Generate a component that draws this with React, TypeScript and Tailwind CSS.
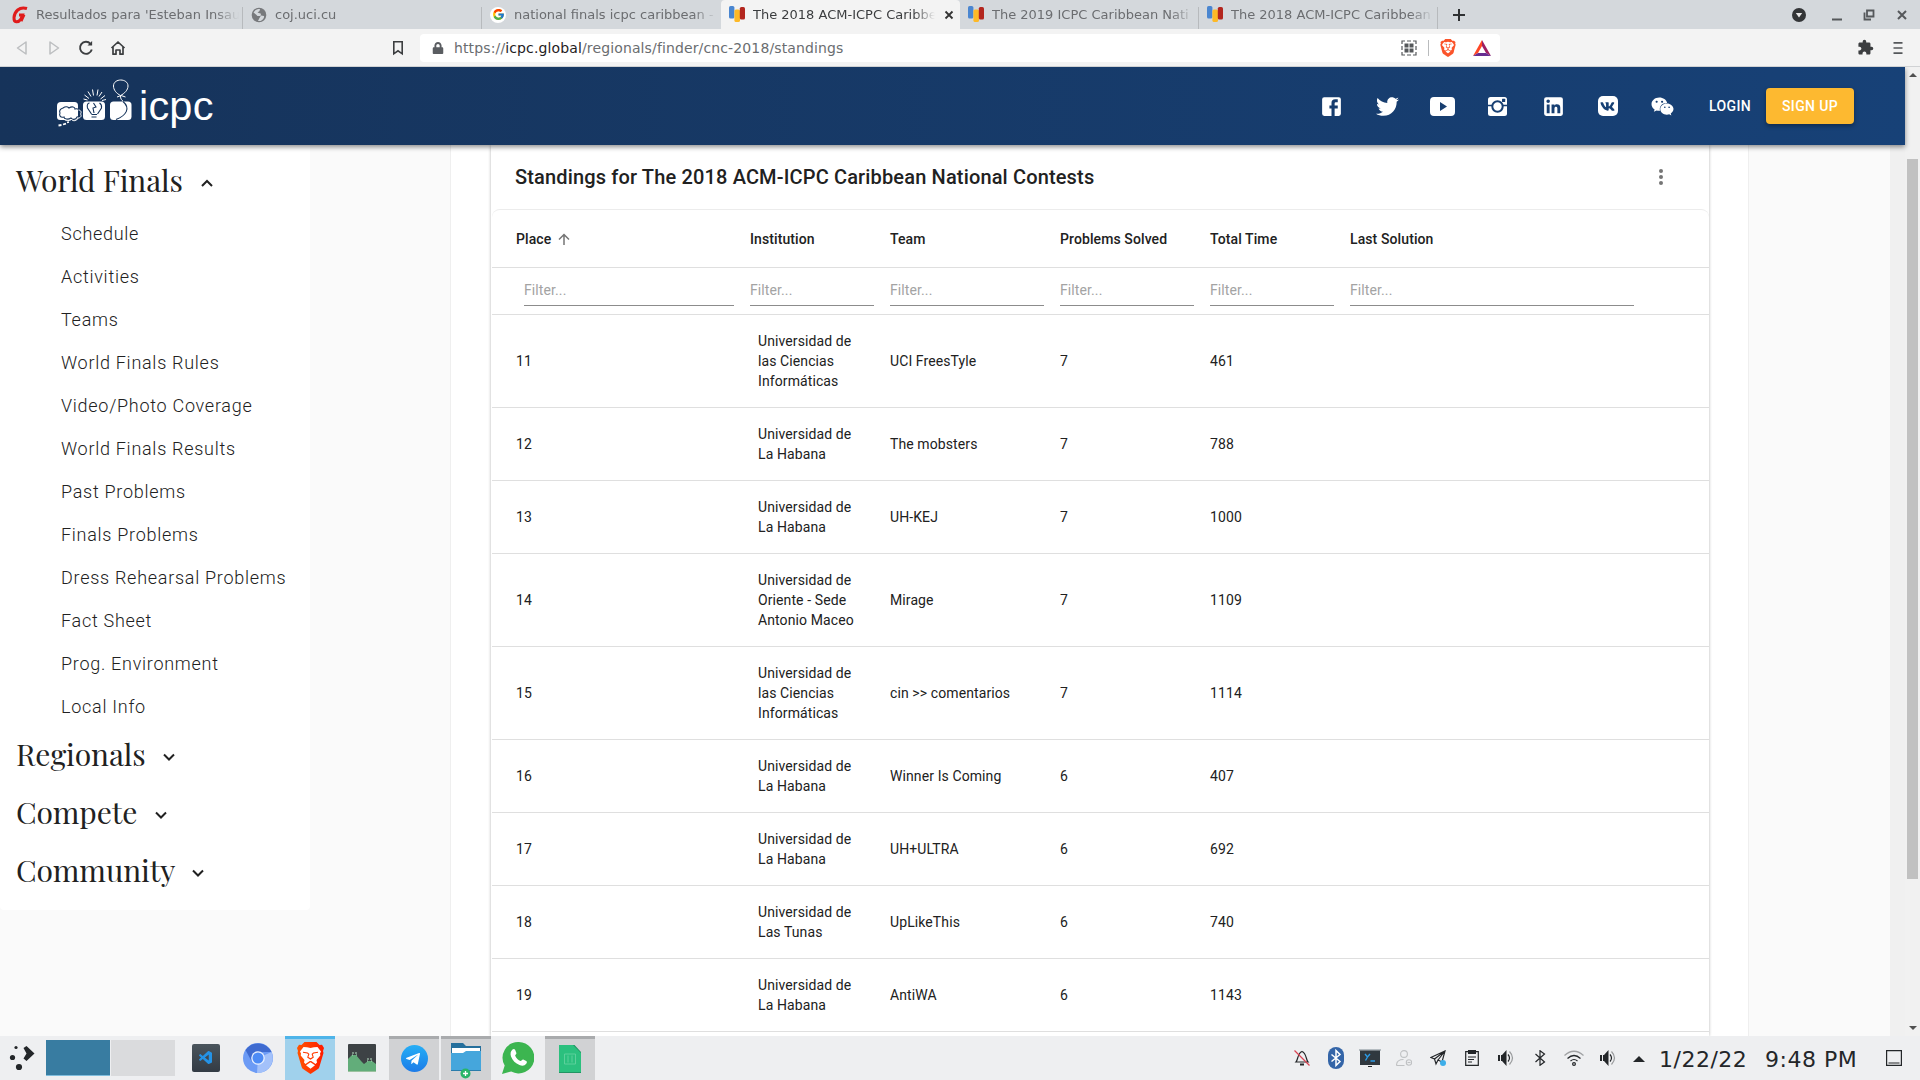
import React from "react";
import { FaTwitter, FaVk, FaWeixin, FaTelegramPlane, FaLock } from "react-icons/fa";
import { FaBrave } from "react-icons/fa6";
import { FcGoogle } from "react-icons/fc";
import { MdExtension } from "react-icons/md";
import { VscVscode } from "react-icons/vsc";

type TabInfo = { title: string; icon: React.ReactNode; active?: boolean };

const IcpcFavicon = () => (
  <svg className="h-5 w-4" viewBox="0 0 16 20">
    <rect x="0" y="1" width="5.4" height="12.5" rx="1.6" fill="#4a86d0" />
    <rect x="5.4" y="4.5" width="5.6" height="12.5" rx="1.6" fill="#fdb927" />
    <rect x="10.8" y="2" width="5.2" height="12.5" rx="1.6" fill="#b3261e" />
  </svg>
);

const GIcon = () => (
  <svg className="h-5 w-4" viewBox="0 0 16 20" fill="none" stroke="#e01b1b" strokeWidth="3">
    <path d="M15 3.5C7 1 2.500 7 2 12.500c-.3 5.500 4 5.500 7 1.500l1.500-4H7M12 9.500l-3 6.500" />
  </svg>
);

const GlobeIcon = () => (
  <svg className="h-4 w-4" viewBox="0 0 16 16">
    <circle cx="8" cy="8" r="7.300" fill="#77797c" />
    <path d="M2.500 5.500c2-3 4-3.500 6.500-3.500l-.5 2-2 1.500 3.500 1.200-.5 2.300h-3L5 7.500zM10 8.500l3 .5c.5 2-1.500 4-3.500 5H7l1.200-2.500z" fill="#d4d8dc" />
  </svg>
);

const tabs: TabInfo[] = [
  { title: "Resultados para 'Esteban Insau", icon: <GIcon /> },
  { title: "coj.uci.cu", icon: <GlobeIcon /> },
  {
    title: "national finals icpc caribbean -",
    icon: (
      <span className="flex h-4 w-4 items-center justify-center rounded-full bg-white">
        <FcGoogle size={13} />
      </span>
    ),
  },
  { title: "The 2018 ACM-ICPC Caribbe", icon: <IcpcFavicon />, active: true },
  { title: "The 2019 ICPC Caribbean Nati", icon: <IcpcFavicon /> },
  { title: "The 2018 ACM-ICPC Caribbean", icon: <IcpcFavicon /> },
];

function TabBar() {
  return (
    <div className="flex h-[29px] shrink-0 bg-[#d4d8dc] pl-[4px] font-['DejaVu_Sans',sans-serif] text-[13px] text-[#6b6d70]">
      {tabs.map((t, i) => (
        <div
          key={i}
          className={
            t.active
              ? "flex w-[239px] shrink-0 items-center rounded-t-[4px] bg-[#f3f3f3] pr-[6px] pl-2 text-[#3b3d3f]"
              : "relative flex w-[239px] shrink-0 items-center pr-[4px] pl-2"
          }
        >
          <span className="flex w-4 shrink-0 items-center justify-center">{t.icon}</span>
          <span className="mt-px ml-[8px] min-w-0 flex-1 overflow-hidden [mask-image:linear-gradient(to_right,black_88%,transparent)] whitespace-nowrap">
            {t.title}
          </span>
          {t.active && (
            <svg className="ml-[9px] h-[10px] w-[10px] shrink-0" viewBox="0 0 10 10" stroke="#333" strokeWidth="1.8">
              <path d="M1.500 1.500l7 7M8.500 1.500l-7 7" />
            </svg>
          )}
          {!t.active && i !== 2 && <span className="absolute right-0 bottom-0 h-[22px] w-px bg-[#b7babd]" />}
        </div>
      ))}
      <div className="flex flex-1 items-center">
        <svg className="ml-[15px] h-3 w-3" viewBox="0 0 12 12" stroke="#2f3133" strokeWidth="2">
          <path d="M6 0v12M0 6h12" />
        </svg>
        <svg className="ml-auto h-4 w-4" viewBox="0 0 16 16">
          <circle cx="8" cy="8" r="7" fill="#333537" />
          <path d="M4.800 6h6.400L8 10.500z" fill="#e8e8e8" />
        </svg>
        <svg className="ml-[24px] h-3 w-3" viewBox="0 0 12 12">
          <path d="M1 9.500h10v2H1z" fill="#55585b" />
        </svg>
        <svg className="ml-[20px] h-3 w-3" viewBox="0 0 12 12" fill="none" stroke="#55585b" strokeWidth="1.800">
          <path d="M4 1.500h6.500v6H4zM1.500 3.500v7H8" />
        </svg>
        <svg className="mr-[13px] ml-[22px] h-[10px] w-[10px]" viewBox="0 0 10 10" stroke="#55585b" strokeWidth="2">
          <path d="M1 1l8 8M9 1l-8 8" />
        </svg>
      </div>
    </div>
  );
}

function Toolbar() {
  return (
    <div className="flex h-[38px] shrink-0 items-center border-b border-[#d0d2d4] bg-[#f3f3f3] pr-[14px]">
      <svg className="ml-[15px] h-4 w-3.5" viewBox="0 0 14 16" fill="none" stroke="#bcbec0" strokeWidth="1.500" strokeLinejoin="round">
        <path d="M11 2v12L2.500 8z" />
      </svg>
      <svg className="ml-[18px] h-4 w-3.5" viewBox="0 0 14 16" fill="none" stroke="#bcbec0" strokeWidth="1.500" strokeLinejoin="round">
        <path d="M3 2v12l8.500-6z" />
      </svg>
      <svg className="ml-[17px] h-4 w-4" viewBox="0 0 16 16" fill="none" stroke="#3c3e40" strokeWidth="1.900">
        <path d="M12.500 3.800A6 6 0 1 0 13.800 9.500" />
        <path d="M9.500 5.600h4.600V1z" fill="#3c3e40" stroke="none" />
      </svg>
      <svg className="ml-[16px] h-4 w-4" viewBox="0 0 16 16" fill="none" stroke="#3c3e40" strokeWidth="1.700" strokeLinejoin="round">
        <path d="M1.500 8L8 2l6.500 6M3 7v7.200h3V10h4v4.200h3V7" />
      </svg>
      <svg className="ml-[264px] h-4 w-4" viewBox="0 0 16 16" fill="none" stroke="#3c3e40" strokeWidth="1.600">
        <path d="M3.800 1.800h8.400v12L8 10.800l-4.200 3z" />
      </svg>
      <div className="ml-[14px] flex h-7 w-[1080px] items-center rounded-[4px] bg-white font-['DejaVu_Sans',sans-serif] text-[14px] tracking-[0.130px] text-[#6a6d70]">
        <FaLock className="ml-[12px] h-3 w-3" color="#5a5d61" />
        <span className="mt-px ml-[10px] flex-1 whitespace-nowrap">
          https://<span className="text-[#1f2123]">icpc.global</span>/regionals/finder/cnc-2018/standings
        </span>
        <svg className="h-4 w-4" viewBox="0 0 16 16" fill="none" stroke="#55585b">
          <path d="M1 4V1h3M6 1h4M12 1h3v3M15 6v4M15 12v3h-3M10 15H6M4 15H1v-3M1 10V6" strokeWidth="1.200" />
          <path d="M3.500 3.500h4v4h-4zM8.500 3.500h4v4h-4zM3.500 8.500h4v4h-4zM8.500 8.500h4v4h-4z" fill="#55585b" stroke="none" />
        </svg>
        <span className="mr-[10px] ml-[11px] h-4 w-px bg-[#b9bbbd]" />
        <FaBrave size={18} color="#fb542b" />
        <svg className="mr-[9px] ml-[16px] h-4 w-[18px]" viewBox="0 0 18 16">
          <path d="M9 0L0 16l5-3 4-7z" fill="#ff4724" />
          <path d="M9 0l9 16-5-3-4-7z" fill="#9e1f63" />
          <path d="M0 16h18l-5-3H5z" fill="#662d91" />
        </svg>
      </div>
      <MdExtension className="ml-auto" size={17} color="#3c3e40" />
      <svg className="ml-[16px] h-4 w-4" viewBox="0 0 16 16" stroke="#55585b" strokeWidth="1.700">
        <path d="M3.500 2.800h9M3.500 8h9M3.500 13.200h9" />
      </svg>
    </div>
  );
}

const LogoMark = () => (
  <svg className="h-[56px] w-[86px]" viewBox="50 76 86 56" fill="none" stroke="white">
    <path d="M61 102h13.500a3.500 3.500 0 0 1 3.500 3.500V117a3 3 0 0 1-3 3H60a3 3 0 0 1-3-3v-11a4 4 0 0 1 4-4z" fill="white" stroke="none" />
    <rect x="83" y="101.500" width="22" height="18.500" rx="3.500" fill="white" stroke="none" />
    <rect x="110" y="101.500" width="21.500" height="18.500" rx="3.500" fill="white" stroke="none" />
    <path d="M63 108c3-2 5-1 6 0 3-2 6-1 6 1 3-1 5 1 4 3 2 2 1 5-2 5-1 3-5 3-6 1-3 2-7 1-7-1-4 1-5-2-4-4-1-2 0-4 3-5z" stroke="#16345b" strokeWidth="1.100" />
    <path d="M78.500 110c2 0 3.500 2 2 4 1.500 2 0 4-2.500 4-1 3-5 3.500-6.500 1.500-3 2-7 1-7.500-.5" strokeWidth="1" />
    <path d="M58.500 125.500l3-.5M63 124.500l3-.8M67 122.500l2-.5" strokeWidth="1.800" />
    <path d="M91.500 114l-4-6c-1-4 1-5 2-5M97.500 114l4-6c.5-3-.5-4-2-5M91.500 114.500h5.500M91.500 117h5M94 113l-1-5 3-1-2.500-4" stroke="#16345b" strokeWidth="1.100" />
    <path d="M83.500 99l4 1M84.500 95l4.500 3.500M88 91.500l3 5M92.500 89.500l1 6M98 89.500l-1 6M102 92l-3 4.500M105 95.500l-4.500 3.500M106 99.500l-4 1" strokeWidth="1" />
    <path d="M120.500 95.500c-4-2-7-5.500-7-9.500 0-8 14.500-8 14.500 0 0 4-3.500 7.500-7.500 9.500zM117 97l4-1.500 4.500 1.500M120.500 96c0 3 1 4 3 5.500" strokeWidth="1" />
    <path d="M123 101.500c8 7 3 14-7 18" stroke="#16345b" strokeWidth="1.100" />
  </svg>
);

const mdi = {
  facebook:
    "M5,3H19A2,2 0 0,1 21,5V19A2,2 0 0,1 19,21H5A2,2 0 0,1 3,19V5A2,2 0 0,1 5,3M18,5H15.5A3.5,3.5 0 0,0 12,8.5V11H10V14H12V21H15V14H18V11H15V9A1,1 0 0,1 16,8H18V5Z",
  linkedin:
    "M19,3A2,2 0 0,1 21,5V19A2,2 0 0,1 19,21H5A2,2 0 0,1 3,19V5A2,2 0 0,1 5,3H19M18.5,18.5V13.2A3.26,3.26 0 0,0 15.24,9.94C14.39,9.94 13.4,10.46 12.92,11.24V10.13H10.13V18.5H12.92V13.57C12.92,12.8 13.54,12.17 14.31,12.17A1.4,1.4 0 0,1 15.71,13.57V18.5H18.5M6.88,8.56A1.68,1.68 0 0,0 8.56,6.88C8.56,5.95 7.81,5.19 6.88,5.19A1.69,1.69 0 0,0 5.19,6.88C5.19,7.81 5.95,8.56 6.88,8.56M8.27,18.5V10.13H5.5V18.5H8.27Z",
};

const Mdi = ({ d }: { d: string }) => (
  <svg className="h-[25px] w-[25px]" viewBox="0 0 24 24" fill="white" fillRule="evenodd">
    <path d={d} />
  </svg>
);

function SiteHeader() {
  return (
    <header className="relative z-10 flex h-[78px] shrink-0 items-center bg-linear-to-r from-[#16335a] to-[#174177] text-white shadow-[0_2px_5px_rgba(0,0,0,0.45)]">
      <div className="mt-[-4px] flex h-[56px] items-start pl-[50px]">
        <LogoMark />
        <span className="mt-[6px] ml-[3px] font-['Liberation_Sans',Arial,sans-serif] text-[41.5px] leading-[48px] tracking-[0.2px]">icpc</span>
      </div>
      <div className="ml-auto flex items-center">
        <div className="grid grid-cols-[56px_55px_55.500px_55px_56px_53px_56px] justify-items-center">
          <Mdi d={mdi.facebook} />
          <FaTwitter size={23} className="self-center" />
          <svg className="h-[25px] w-[25px]" viewBox="0 0 25 25" fill="white" fillRule="evenodd">
            <path d="M4 3h17a4 4 0 0 1 4 4v11a4 4 0 0 1-4 4H4a4 4 0 0 1-4-4V7a4 4 0 0 1 4-4zm6 5v9l7-4.500z" />
          </svg>
          <svg className="h-[25px] w-[25px]" viewBox="0 0 25 25">
            <rect x="3" y="3" width="19" height="19" rx="2.500" fill="white" />
            <g fill="none" stroke="#173f72">
              <path d="M3 11.500h4.500M17.500 11.500H22" strokeWidth="1.400" />
              <circle cx="12.500" cy="12.500" r="5.200" strokeWidth="2" />
            </g>
            <rect x="17" y="4.800" width="3.200" height="3.200" rx="0.500" fill="#173f72" />
          </svg>
          <Mdi d={mdi.linkedin} />
          <span className="flex h-[20px] w-5 items-center justify-center self-center rounded-[5px] bg-white">
            <FaVk size={15} color="#174074" />
          </span>
          <FaWeixin size={23} className="self-center" />
        </div>
        <span className="ml-[19px] w-[57px] font-[Roboto,sans-serif] text-sm font-medium tracking-[0.400px]">LOGIN</span>
        <button className="mr-[51px] h-9 w-[88px] rounded-[4px] bg-[#fdb930] font-[Roboto,sans-serif] text-sm font-medium tracking-[0.350px] whitespace-nowrap shadow-[0_2px_4px_rgba(0,0,0,0.35)]">
          SIGN UP
        </button>
      </div>
    </header>
  );
}

const Chevron = ({ up }: { up?: boolean }) => (
  <svg className="h-3 w-3" viewBox="0 0 12 12" fill="none" stroke="#212121" strokeWidth="2">
    <path d={up ? "M1 9l5-5 5 5" : "M1 3.500l5 5 5-5"} />
  </svg>
);

const links = [
  "Schedule",
  "Activities",
  "Teams",
  "World Finals Rules",
  "Video/Photo Coverage",
  "World Finals Results",
  "Past Problems",
  "Finals Problems",
  "Dress Rehearsal Problems",
  "Fact Sheet",
  "Prog. Environment",
  "Local Info",
];

const Heading = ({ text, width, up }: { text: string; width: string; up?: boolean }) => (
  <div className="flex h-[58px] items-center pl-4 font-['Playfair_Display','Liberation_Serif',serif] text-[30px] tracking-[-0.120px] text-[#212121]">
    <span className={"whitespace-nowrap " + width}>{text}</span>
    <span className="mt-[5px]">
      <Chevron up={up} />
    </span>
  </div>
);

function Sidebar() {
  return (
    <aside className="h-[765px] w-[310px] shrink-0 rounded-b-[4px] bg-white pt-[6px]">
      <Heading text="World Finals" width="w-[185px]" up />
      <ul className="pt-[3px] font-[Roboto,sans-serif] text-[18px] font-light tracking-[0.720px] text-[#212121]">
        {links.map((l) => (
          <li key={l} className="flex h-[43px] items-center pl-[61px] whitespace-nowrap">
            {l}
          </li>
        ))}
      </ul>
      <div className="mt-[-3px]">
        <Heading text="Regionals" width="w-[147px]" />
        <Heading text="Compete" width="w-[139px]" />
        <Heading text="Community" width="w-[176px]" />
      </div>
    </aside>
  );
}

const UCI = ["Universidad de", "las Ciencias", "Informáticas"];
const UH = ["Universidad de", "La Habana"];
const rows: [string, string[], string, string, string][] = [
  ["11", UCI, "UCI FreesTyle", "7", "461"],
  ["12", UH, "The mobsters", "7", "788"],
  ["13", UH, "UH-KEJ", "7", "1000"],
  ["14", ["Universidad de", "Oriente - Sede", "Antonio Maceo"], "Mirage", "7", "1109"],
  ["15", UCI, "cin >> comentarios", "7", "1114"],
  ["16", UH, "Winner Is Coming", "6", "407"],
  ["17", UH, "UH+ULTRA", "6", "692"],
  ["18", ["Universidad de", "Las Tunas"], "UpLikeThis", "6", "740"],
  ["19", UH, "AntiWA", "6", "1143"],
];

const gridCols = "grid grid-cols-[234px_140px_170px_150px_140px_300px] items-center border-b border-[#dfdfdf] pl-6";

function Standings() {
  return (
    <div className="w-[1299px] shrink-0 border-x border-[#efefef] bg-white pl-[40px]">
      <div className="h-full w-[1218px] bg-white font-[Roboto,sans-serif] text-sm leading-5 tracking-[0.1px] text-[#212121] shadow-[0_0_3px_rgba(0,0,0,0.3)]">
        <div className="flex h-[64px] items-center justify-between pr-[46px] pl-6">
          <h2 className="text-[20px] font-medium tracking-[0.15px]">Standings for The 2018 ACM-ICPC Caribbean National Contests</h2>
          <svg className="h-4 w-1" viewBox="0 0 4 16" fill="#757575">
            <circle cx="2" cy="2" r="2" />
            <circle cx="2" cy="8" r="2" />
            <circle cx="2" cy="14" r="2" />
          </svg>
        </div>
        <div className="ml-px rounded-t-[8px] border-t border-[#ececec]">
          <div className={gridCols + " h-[58px] font-medium"}>
            <span className="flex items-center">
              Place
              <svg className="ml-[7px] h-3 w-3" viewBox="0 0 12 12" fill="none" stroke="#757575" strokeWidth="1.500">
                <path d="M6 12V1.500M1 6.500l5-5 5 5" />
              </svg>
            </span>
            <span>Institution</span>
            <span>Team</span>
            <span>Problems Solved</span>
            <span>Total Time</span>
            <span>Last Solution</span>
          </div>
          <div className={gridCols + " h-[47px] pb-px text-[#a3a3a3]"}>
            {["ml-2", "", "", "", "", ""].map((c, i) => (
              <span key={i} className={"mr-4 flex h-[30px] items-center border-b border-[#8c8c8c] " + c}>
                Filter...
              </span>
            ))}
          </div>
          {rows.map(([place, inst, team, solved, time]) => (
            <div key={place} className={gridCols + " py-4"}>
              <span>{place}</span>
              <span className="flex flex-col pl-2 whitespace-nowrap">
                {inst.map((s) => (
                  <span key={s}>{s}</span>
                ))}
              </span>
              <span>{team}</span>
              <span>{solved}</span>
              <span>{time}</span>
              <span />
            </div>
          ))}
        </div>
      </div>
    </div>
  );
}

function Page() {
  return (
    <div className="flex h-[969px] shrink-0 overflow-hidden bg-[#f0f0f0]">
      <div className="flex w-[1905px] shrink-0 flex-col">
        <SiteHeader />
        <div className="flex h-[891px] w-[1890px] bg-[#fafafa]">
          <Sidebar />
          <div className="w-[140px] shrink-0" />
          <Standings />
        </div>
      </div>
      <div className="flex w-[15px] flex-col items-center bg-[#f1f1f1]">
        <svg className="mt-[5px] h-[6px] w-2" viewBox="0 0 8 6" fill="#505050">
          <path d="M4 1l4 4H0z" />
        </svg>
        <div className="mt-[81px] h-[720px] w-[11px] bg-[#c1c1c1]" />
        <svg className="mt-auto mb-[5px] h-[6px] w-2" viewBox="0 0 8 6" fill="#505050">
          <path d="M0 1h8L4 5z" />
        </svg>
      </div>
    </div>
  );
}

const Volume = () => (
  <svg className="h-4 w-4" viewBox="0 0 16 16" fill="none">
    <path d="M0 5h2v6H0zM3 5h1l4.500-5v16L4 11H3z" fill="#232629" />
    <path d="M10 4.500q3 3.500 0 7" stroke="#232629" strokeWidth="1.200" />
    <path d="M11.500 1.500q6 6.500 0 13" stroke="#9a9c9e" strokeWidth="1.200" />
  </svg>
);

const Task = ({ children, state }: { children: React.ReactNode; state?: "active" | "open" }) => (
  <div
    className={
      state === "active"
        ? "flex w-[50px] items-center justify-center border-t-[3px] border-[#4eb4e9] bg-[#a0d1ec] pb-[3px]"
        : state === "open"
          ? "flex w-[50px] items-center justify-center border-t-[3px] border-[#a9abad] bg-[#d1d2d4] pb-[3px]"
          : "flex w-[50px] items-center justify-center"
    }
  >
    {children}
  </div>
);

const BraveLion = () => (
  <svg className="h-8 w-[27px]" viewBox="0 0 27 32">
    <defs>
      <linearGradient id="lion" x1="0" x2="1">
        <stop offset="0" stopColor="#ff5500" />
        <stop offset="1" stopColor="#ff1a00" />
      </linearGradient>
    </defs>
    <path d="M7.500 0h12l3 3 2.500-.3L27 6l-1 3 .5 2-4 13.500c-.5 2-1.500 2.500-3 3.500L13.500 32 7.500 28c-1.500-1-2.500-1.500-3-3.500L.5 11 1 9 0 6l2-3.300 2.500.3z" fill="url(#lion)" />
    <path d="M13.500 6l3.500-.8L20.500 5 24 9.500l-1 2 .3 2-3.800 4.500.5 2.500-1.500 1.500-4.300-3h-1.400l-4.300 3L7 20.500 7.500 18l-3.800-4.500.3-2-1-2L6.500 5l3.500.2z" fill="white" />
    <path d="M6 10.300l4.500.7 1.300 1.200-1 3 2.700 1.800 2.700-1.800-1-3 1.300-1.200 4.500-.7" fill="none" stroke="#ff3a00" strokeWidth="1.100" />
    <path d="M9 23.300l4.500-3 4.500 3-4.500 3.500z" fill="white" />
  </svg>
);

function Taskbar() {
  return (
    <div className="flex h-[44px] shrink-0 bg-[#eeeff1]">
      <svg className="mt-[8px] ml-[9px] h-7 w-[26px]" viewBox="0 0 26 28" fill="#232629">
        <circle cx="7" cy="3.500" r="1.600" />
        <circle cx="3.500" cy="13.500" r="2.600" />
        <circle cx="10" cy="23" r="3.100" />
        <path d="M14.500 4l3-2 8 7.500-8 7.500-3-2.500 3-5z" />
      </svg>
      <div className="mt-[4px] ml-[11px] h-9 w-16 border-b border-[#7fbddd] bg-[#387ca1]" />
      <div className="mt-[4px] ml-px h-9 w-16 bg-[#dadbdd]" />
      <div className="ml-[6px] flex gap-[2px]">
        <Task>
          <span className="flex h-7 w-7 items-center justify-center rounded-[2px] bg-linear-to-b from-[#4a555d] to-[#333b44]">
            <VscVscode size={16} color="#2493e6" />
          </span>
        </Task>
        <Task>
          <svg className="h-[30px] w-[30px]" viewBox="0 0 30 30">
            <circle cx="15" cy="15" r="15" fill="#6c9bf5" />
            <path d="M15 15L28.500 9A15 15 0 0 1 14 30z" fill="#a3c1fa" />
            <path d="M2.500 7A15 15 0 0 1 28.500 9H15L9 19z" fill="#3f6bd0" />
            <circle cx="15" cy="15" r="6.800" fill="#e8f0ff" />
            <circle cx="15" cy="15" r="5.500" fill="#4d8bf5" />
          </svg>
        </Task>
        <Task state="active">
          <BraveLion />
        </Task>
        <Task>
          <svg className="h-7 w-7" viewBox="0 0 28 28">
            <rect width="28" height="28" rx="1" fill="#3d4245" />
            <path d="M0 15l4-4h4l5 6 3 3 4-3h4l4 3v7.500H0z" fill="#62ad7a" />
            <path d="M4 9h2M7 9h2M4 11h1M8 11h1M19 15h2M22 15h2M19 17h1M23 17h1" stroke="#b7e0c4" strokeWidth="1.100" />
            <path d="M0 27h28v1H0z" fill="#9bc29f" />
          </svg>
        </Task>
        <Task state="open">
          <span className="mt-px flex h-[27px] w-[27px] items-center justify-center rounded-full bg-linear-to-b from-[#27aef5] to-[#1d7be8]">
            <FaTelegramPlane size={16} color="#fff" className="mr-[2px]" />
          </span>
        </Task>
        <Task state="open">
          <svg className="mt-[5px] h-[36px] w-[30px]" viewBox="0 0 30 36">
            <path d="M0 0h12l3 3h15v10H0z" fill="#256f9c" />
            <path d="M1 5h28v8H1z" fill="#fff" />
            <path d="M0 10h12l3-2h15v20H0z" fill="#45a6dc" />
            <path d="M0 27h30v1H0z" fill="#2a7cab" />
            <circle cx="14.500" cy="30.500" r="5" fill="#27b568" />
            <path d="M14.500 28v5M12 30.500h5" stroke="#fff" strokeWidth="1.300" />
          </svg>
        </Task>
        <Task>
          <svg className="h-8 w-8" viewBox="0 0 32 32">
            <path d="M16.500 0a15.700 15.700 0 1 1-7.300 29.500L0 32l2.700-8.500A15.700 15.700 0 0 1 16.500 0z" fill="#3cb550" />
            <path d="M10.500 7.500c1-1 2.200-.7 2.700.5l1.200 3c.3.800-1.400 2-1.200 2.700 1 2.500 3 4.300 5.300 5.300.8.200 1.800-1.800 2.700-1.500l3 1.500c1 .6.800 1.500 0 2.800-1.500 2-4 2.300-6.700 1.200-4-1.500-7-4.500-8.500-8.500-.8-2.800-.5-5.200 1.500-7z" fill="#fff" />
          </svg>
        </Task>
        <Task state="open">
          <svg className="mt-px h-7 w-[22px]" viewBox="0 0 22 28">
            <path d="M0 0h15l7 7v21H0z" fill="#2bc07e" />
            <path d="M14 0h8v8z" fill="#1f8f5f" />
            <path d="M15.500 0H22v7z" fill="#d1d2d4" />
            <path d="M5.500 9h11v10h-11zM9 10.500v7M13 10.500v7" fill="none" stroke="#5dd09b" strokeWidth="1" />
            <path d="M0 27h22v1H0z" fill="#219463" />
          </svg>
        </Task>
      </div>
      <div className="ml-auto grid grid-cols-[repeat(10,34px)] place-items-center">
        <svg className="h-4 w-4" viewBox="0 0 16 16" fill="none" stroke="#232629" strokeWidth="1.200">
          <path d="M2 12c2-2 1.500-9 6-10.500 4.500 1.500 4 8.500 6 10.500z" />
          <path d="M6 13.500h4v2H6z" fill="#232629" stroke="none" />
          <path d="M.5 .5l15 15" stroke="#da4453" />
        </svg>
        <svg className="h-[22px] w-4" viewBox="0 0 16 22" fill="none">
          <rect width="16" height="22" rx="8" fill="#3465a8" />
          <path d="M3.500 7.500l8.500 7-4 4v-15l4 4-8.500 7" stroke="#fff" strokeWidth="1.500" />
        </svg>
        <svg className="h-[18px] w-[22px]" viewBox="0 0 22 18">
          <path d="M0 0h22v2H0z" fill="#b5bcc1" />
          <path d="M1 1.500h20V16H1z" fill="#30383f" />
          <path d="M9 17h4v1H9z" fill="#232629" />
          <path d="M6 5l2.500 3L11 5M8.500 8l-2 3.500M11.500 12h4.500" stroke="#2b9be6" strokeWidth="1.400" fill="none" />
        </svg>
        <svg className="h-4 w-4" viewBox="0 0 16 16" fill="none" stroke="#bfc1c3" strokeWidth="1.100">
          <circle cx="8" cy="4" r="3.400" />
          <path d="M.5 15.500c0-4 2.500-6 7-6M.5 15.500h8" />
          <circle cx="13" cy="12.500" r="2.700" />
          <path d="M11.500 12.500h3" />
        </svg>
        <svg className="h-4 w-4" viewBox="0 0 16 16" fill="none" stroke="#232629" strokeWidth="1.200">
          <path d="M.8 7.500L15 1l-3 11-4-2-2 4-1.500-5zM15 1L4.500 9M15 1L8 10" />
          <circle cx="13" cy="13" r="3" fill="#3daee9" stroke="none" />
        </svg>
        <svg className="h-4 w-[14px]" viewBox="0 0 14 16" fill="none" stroke="#232629" strokeWidth="1.200">
          <path d="M.7 1.700h12.600v13.600H.7z" />
          <path d="M3 0h8v4H3z" fill="#232629" stroke="none" />
          <path d="M3 7h8M3 9.500h6M3 12h4" />
        </svg>
        <Volume />
        <svg className="h-4 w-4" viewBox="0 0 16 16" fill="none" stroke="#232629" strokeWidth="1.200">
          <path d="M3.500 4l9 8L8 15.300V.7L12.500 4l-9 8" />
        </svg>
        <svg className="h-4 w-5" viewBox="0 0 20 16" fill="none" stroke="#232629" strokeWidth="1.200">
          <path d="M.5 5.500Q10-3 19.500 5.500" stroke="#a0a2a4" />
          <path d="M3.500 8.500q6.500-6 13 0M6.500 11q3.500-3 7 0" />
          <circle cx="10" cy="14" r="1.400" />
        </svg>
        <Volume />
      </div>
      <svg className="mt-[20px] ml-[8px] h-[6px] w-3" viewBox="0 0 12 6" fill="#232629">
        <path d="M6 0l6 6H0z" />
      </svg>
      <div className="flex h-full items-center pt-[2px] font-['DejaVu_Sans',sans-serif] text-[22px] tracking-[0.500px] whitespace-nowrap text-[#232629]">
        <span className="ml-[14px] w-[106px]">1/22/22</span>
        <span className="w-[121px]">9:48 PM</span>
      </div>
      <svg className="mt-[14px] mr-[18px] h-4 w-4" viewBox="0 0 16 16" fill="none" stroke="#232629" strokeWidth="1.200">
        <path d="M.6.6h14.800v14.800H.6zM2.500 13h11" />
      </svg>
    </div>
  );
}

export default function App() {
  return (
    <div className="flex h-[1080px] w-[1920px] flex-col overflow-hidden">
      <TabBar />
      <Toolbar />
      <Page />
      <Taskbar />
    </div>
  );
}
